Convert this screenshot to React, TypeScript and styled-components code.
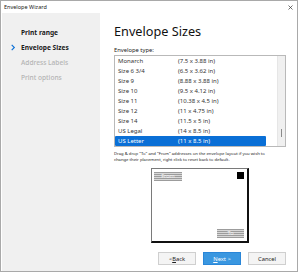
import React from 'react';
import styled, { createGlobalStyle } from 'styled-components';

const GlobalStyle = createGlobalStyle`
  html, body {
    margin: 0;
    padding: 0;
    background: #ffffff;
  }
  body {
    font-family: 'Noto Sans', 'Open Sans', sans-serif;
    color: #1a1a1a;
  }
`;

const Window = styled.div`
  width: 296px;
  height: 270px;
  border: 1px solid #a9a9a9;
  display: flex;
  flex-direction: column;
  background: #fff;
  overflow: hidden;
`;

const TitleBar = styled.div`
  height: 12px;
  flex: none;
  display: flex;
  align-items: center;
  justify-content: space-between;
  padding: 0 4px 0 3px;
  font-size: 5.5px;
  color: #222;
`;

const CloseIcon = styled.svg`
  width: 5px;
  height: 5px;
`;

const Body = styled.div`
  flex: 1;
  display: flex;
`;

const Sidebar = styled.div`
  width: 98px;
  margin-left: 1px;
  background: #f0f0f0;
  padding-top: 12px;
  display: flex;
  flex-direction: column;
`;

const Step = styled.div<{ $state: 'done' | 'active' | 'todo' }>`
  height: 15px;
  display: flex;
  align-items: center;
  padding-left: 19px;
  position: relative;
  font-size: 6.6px;
  color: ${(p) => (p.$state === 'todo' ? '#b4b4b4' : '#202020')};
  font-weight: ${(p) => (p.$state === 'todo' ? 500 : 700)};
`;

const Chevron = styled.svg`
  position: absolute;
  left: 8px;
  top: 4px;
  width: 6px;
  height: 7px;
`;

const Main = styled.div`
  flex: 1;
  display: flex;
  flex-direction: column;
  padding: 9px 11px 0 14px;
`;

const Heading = styled.h1`
  margin: 0;
  font-size: 12.7px;
  font-weight: 400;
  line-height: 18px;
  color: #111;
`;

const Label = styled.div`
  margin-top: 6px;
  font-size: 5.8px;
  line-height: 8px;
  color: #222;
`;

const ListBox = styled.div`
  margin-top: 1px;
  height: 90px;
  border: 1px solid #b9b9b9;
  display: flex;
`;

const Rows = styled.div`
  flex: 1;
  display: flex;
  flex-direction: column;
  padding-right: 11px;
`;

const Row = styled.div<{ $selected?: boolean }>`
  height: 10px;
  display: grid;
  grid-template-columns: 60px 1fr;
  align-items: center;
  padding-left: 3px;
  font-size: 6px;
  color: ${(p) => (p.$selected ? '#fff' : '#333')};
  background: ${(p) => (p.$selected ? '#0a6fd6' : 'transparent')};
  border-radius: 1px;
`;

const ScrollTrack = styled.div`
  width: 7px;
  background: #f0f0f0;
  border-left: 1px solid #e6e6e6;
  position: relative;
`;

const Thumb = styled.div`
  position: absolute;
  left: 3px;
  top: 73px;
  width: 1px;
  height: 8px;
  background: #8a8a8a;
`;

const Hint = styled.div`
  margin-top: 4px;
  padding-right: 12px;
  font-size: 4.2px;
  line-height: 5.5px;
  color: #222;
`;

const EnvelopeWrap = styled.div`
  margin-top: 6px;
  display: flex;
  justify-content: center;
`;

const Envelope = styled.div`
  width: 95px;
  height: 72px;
  border-left: 1px solid #7a7a7a;
  border-top: 1px solid #7a7a7a;
  border-right: 2px solid #111;
  border-bottom: 2px solid #111;
  position: relative;
  background: #fff;
`;

const AddressTag = styled.div<{ $w: number }>`
  position: absolute;
  width: ${(p) => p.$w}px;
  height: 9px;
  background: repeating-linear-gradient(
    to bottom,
    #9c9c9c 0px,
    #9c9c9c 1px,
    #d8d8d8 1px,
    #d8d8d8 2px
  );
  font-size: 5.5px;
  line-height: 9px;
  color: #f4f4f4;
  display: flex;
  align-items: center;
  justify-content: center;
`;

const Stamp = styled.div`
  position: absolute;
  right: 3px;
  top: 3px;
  width: 7px;
  height: 7px;
  background: #000;
`;

const Buttons = styled.div`
  margin-top: 9px;
  display: flex;
  justify-content: flex-end;
  gap: 7px;
`;

const Button = styled.div<{ $primary?: boolean }>`
  width: 36px;
  height: 11px;
  display: flex;
  align-items: center;
  justify-content: center;
  font-size: 5.8px;
  border: 1px solid ${(p) => (p.$primary ? '#2a86d8' : '#cfcfcf')};
  background: ${(p) => (p.$primary ? '#3a97e0' : '#f4f4f4')};
  color: ${(p) => (p.$primary ? '#fff' : '#222')};
  u {
    text-decoration: underline;
  }
`;

const sizes: [string, string][] = [
  ['Monarch', '(7.5 x 3.88 in)'],
  ['Size 6 3/4', '(6.5 x 3.62 in)'],
  ['Size 9', '(8.88 x 3.88 in)'],
  ['Size 10', '(9.5 x 4.12 in)'],
  ['Size 11', '(10.38 x 4.5 in)'],
  ['Size 12', '(11 x 4.75 in)'],
  ['Size 14', '(11.5 x 5 in)'],
  ['US Legal', '(14 x 8.5 in)'],
  ['US Letter', '(11 x 8.5 in)'],
];

export default function App() {
  return (
    <>
      <GlobalStyle />
      <Window>
        <TitleBar>
          <span>Envelope Wizard</span>
          <CloseIcon viewBox="0 0 10 10">
            <path d="M1 1 L9 9 M9 1 L1 9" stroke="#333" strokeWidth="1.4" />
          </CloseIcon>
        </TitleBar>
        <Body>
          <Sidebar>
            <Step $state="done">Print range</Step>
            <Step $state="active">
              <Chevron viewBox="0 0 6 8">
                <path d="M1.5 1 L4.5 4 L1.5 7" fill="none" stroke="#0a6fd6" strokeWidth="1.3" />
              </Chevron>
              Envelope Sizes
            </Step>
            <Step $state="todo">Address Labels</Step>
            <Step $state="todo">Print options</Step>
          </Sidebar>
          <Main>
            <Heading>Envelope Sizes</Heading>
            <Label>Envelope type:</Label>
            <ListBox>
              <Rows>
                {sizes.map(([name, dim]) => (
                  <Row key={name} $selected={name === 'US Letter'}>
                    <span>{name}</span>
                    <span>{dim}</span>
                  </Row>
                ))}
              </Rows>
              <ScrollTrack>
                <Thumb />
              </ScrollTrack>
            </ListBox>
            <Hint>
              Drag &amp; drop "To" and "From" addresses on the envelope layout if you wish to change
              their placement, right click to reset back to default.
            </Hint>
            <EnvelopeWrap>
              <Envelope>
                <AddressTag $w={28} style={{ left: 2, top: 3 }}>
                  From
                </AddressTag>
                <AddressTag $w={27} style={{ right: 3, bottom: 3 }}>
                  To
                </AddressTag>
                <Stamp />
              </Envelope>
            </EnvelopeWrap>
            <Buttons>
              <Button>
                &lt; <u>B</u>ack
              </Button>
              <Button $primary>
                <u>N</u>ext &gt;
              </Button>
              <Button>Cancel</Button>
            </Buttons>
          </Main>
        </Body>
      </Window>
    </>
  );
}
